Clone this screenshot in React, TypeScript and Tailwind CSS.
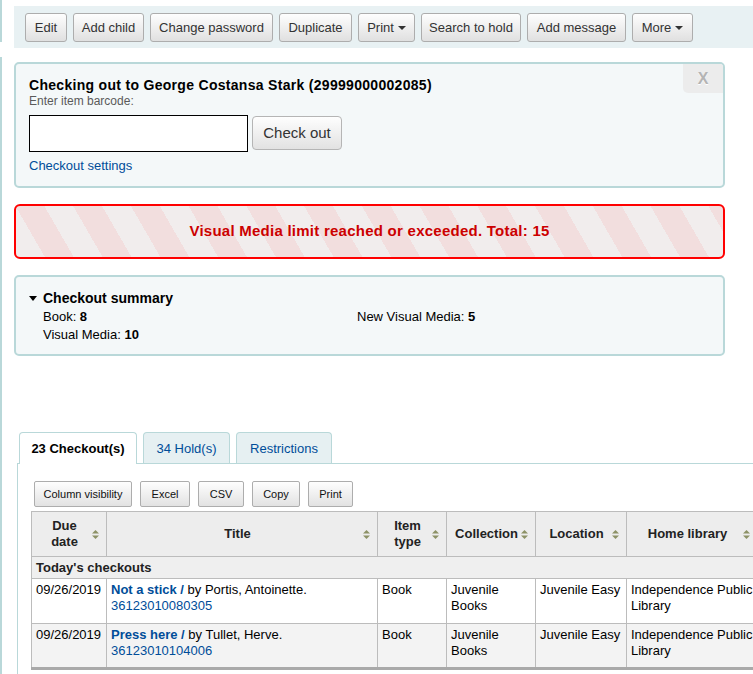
import React from "react";

const SortIcon = () => (
  <svg width="7" height="9" viewBox="0 0 7 9" className="shrink-0">
    <path d="M3.5 0 L7 3.5 L0 3.5 Z" fill="#8d9266" />
    <path d="M0 5.5 L7 5.5 L3.5 9 Z" fill="#8d9266" />
  </svg>
);

const Caret = () => (
  <span className="ml-[4px] inline-block h-0 w-0 border-x-[4px] border-t-[4px] border-x-transparent border-t-[#333]" />
);

const Btn = ({ className, children }: { className: string; children: React.ReactNode }) => (
  <button
    className={
      "flex h-[29px] items-center justify-center rounded-[3px] border border-[#adadad] bg-linear-to-b from-[#fefefe] to-[#e0e0e0] text-[13px] text-[#333] " +
      className
    }
  >
    {children}
  </button>
);

const SmallBtn = ({ className, children }: { className: string; children: React.ReactNode }) => (
  <button
    className={
      "flex h-[26px] items-center justify-center rounded-[2px] border border-[#adadad] bg-linear-to-b from-[#fefefe] to-[#e2e2e2] text-[11px] text-[#111] " +
      className
    }
  >
    {children}
  </button>
);

const Th = ({ children, className }: { children: React.ReactNode; className: string }) => (
  <th className={"border border-[#bcbcbc] bg-[#ededed] p-0 align-middle " + className}>
    <div className="flex items-center pl-[5px] pr-[7px]">
      <span className="flex-1 text-center text-[13px] font-bold leading-[16px] text-[#222]">{children}</span>
      <SortIcon />
    </div>
  </th>
);

const Td = ({ children, className }: { children?: React.ReactNode; className?: string }) => (
  <td className={"border border-[#bcbcbc] px-[4px] pt-[3px] align-top leading-[16px] " + (className ?? "")}>
    {children}
  </td>
);

export default function App() {
  return (
    <div className="flex h-[674px] w-[753px] overflow-hidden bg-white font-['Liberation_Sans',Arial,sans-serif] text-[13px] text-black">
      <div className="flex w-[2px] shrink-0 flex-col">
        <div className="h-[42px] bg-[#b9d8d9]" />
        <div className="h-[15px]" />
        <div className="flex-1 bg-[#b9d8d9]" />
      </div>
      <div className="flex min-w-0 flex-1 flex-col pl-[12px]">
        {/* toolbar */}
        <div className="mt-[6px] flex h-[42px] shrink-0 items-start gap-[6px] bg-[#e8f1f3] pl-[11px] pt-[7px]">
          <Btn className="w-[42px]">Edit</Btn>
          <Btn className="w-[71px]">Add child</Btn>
          <Btn className="w-[123px]">Change password</Btn>
          <Btn className="w-[73px]">Duplicate</Btn>
          <Btn className="w-[57px]">
            Print
            <Caret />
          </Btn>
          <Btn className="w-[100px]">Search to hold</Btn>
          <Btn className="w-[99px]">Add message</Btn>
          <Btn className="w-[61px]">
            More
            <Caret />
          </Btn>
        </div>

        {/* checkout box */}
        <div className="relative mt-[14px] h-[126px] w-[711px] shrink-0 rounded-[5px] border-2 border-[#b9d8d9] bg-[#f4f8f9] pl-[13px] pt-[13px]">
          <div className="text-[14px] font-bold leading-[17px] tracking-[0.3px]">
            Checking out to George Costansa Stark (29999000002085)
          </div>
          <div className="text-[12px] leading-[14px] text-[#5a5a5a]">Enter item barcode:</div>
          <div className="mt-[7px] flex items-start">
            <div className="h-[37px] w-[219px] border border-black bg-white" />
            <button className="ml-[4px] mt-[1px] h-[34px] w-[90px] rounded-[4px] border border-[#b5b5b5] bg-linear-to-b from-[#fefefe] to-[#e2e2e2] text-[15px] text-[#333]">
              Check out
            </button>
          </div>
          <div className="mt-[6px] text-[13px] leading-[16px] text-[#004d99]">Checkout settings</div>
          <div className="absolute right-0 top-0 flex h-[29px] w-[40px] items-center justify-center rounded-bl-[5px] rounded-tr-[3px] bg-[#ececec] text-[16px] font-bold text-[#b4b4b4] [text-shadow:0_1px_0_#fff]">
            X
          </div>
        </div>

        {/* alert */}
        <div className="mt-[16px] flex h-[55px] w-[711px] shrink-0 items-center justify-center rounded-[6px] border-2 border-[#ff0000] bg-[repeating-linear-gradient(60deg,#f1eded,#f1eded_25px,#f2dede_25px,#f2dede_50px)]">
          <span className="text-[15px] font-bold tracking-[0.25px] text-[#cc0000]">
            Visual Media limit reached or exceeded. Total: 15
          </span>
        </div>

        {/* summary */}
        <div className="mt-[16px] h-[81px] w-[711px] shrink-0 rounded-[5px] border-2 border-[#b9d8d9] bg-[#f4f8f9] pl-[13px] pt-[12px]">
          <div className="flex items-center text-[14px] font-bold leading-[19px]">
            <span className="mr-[6px] inline-block h-0 w-0 border-x-[4px] border-t-[5px] border-x-transparent border-t-black" />
            Checkout summary
          </div>
          <div className="grid grid-cols-[314px_1fr] pl-[14px] text-[13px] leading-[18px]">
            <div>
              Book: <b>8</b>
            </div>
            <div>
              New Visual Media: <b>5</b>
            </div>
            <div>
              Visual Media: <b>10</b>
            </div>
          </div>
        </div>

        {/* tabs */}
        <div className="ml-[3px] mt-[76px] flex min-h-0 flex-1 flex-col">
          <div className="flex shrink-0 items-end gap-[6px] border-b border-[#b9d8d9] pl-[2px]">
            <div className="-mb-px flex h-[32px] w-[118px] items-center justify-center rounded-t-[4px] border border-b-0 border-[#b9d8d9] bg-white text-[13px] font-bold">
              23 Checkout(s)
            </div>
            <div className="flex h-[31px] w-[87px] items-center justify-center rounded-t-[4px] border border-b-0 border-[#b9d8d9] bg-[#e6f0f2] pt-[1px] text-[13px] text-[#004d99]">
              34 Hold(s)
            </div>
            <div className="flex h-[31px] w-[96px] items-center justify-center rounded-t-[4px] border border-b-0 border-[#b9d8d9] bg-[#e6f0f2] pt-[1px] text-[13px] text-[#004d99]">
              Restrictions
            </div>
          </div>
          <div className="flex-1 border-l border-[#b9d8d9] pl-[13px] pt-[17px]">
            <div className="ml-[3px] flex gap-[8px]">
              <SmallBtn className="w-[98px]">Column visibility</SmallBtn>
              <SmallBtn className="w-[50px]">Excel</SmallBtn>
              <SmallBtn className="w-[46px]">CSV</SmallBtn>
              <SmallBtn className="w-[48px]">Copy</SmallBtn>
              <SmallBtn className="w-[45px]">Print</SmallBtn>
            </div>
            <table className="mt-[4px] w-[726px] table-fixed border-collapse text-[13px]">
              <colgroup>
                <col className="w-[75px]" />
                <col className="w-[271px]" />
                <col className="w-[69px]" />
                <col className="w-[89px]" />
                <col className="w-[91px]" />
                <col className="w-[131px]" />
              </colgroup>
              <thead>
                <tr className="h-[45px]">
                  <Th className="">
                    Due
                    <br />
                    date
                  </Th>
                  <Th className="">Title</Th>
                  <Th className="">
                    Item
                    <br />
                    type
                  </Th>
                  <Th className="">Collection</Th>
                  <Th className="">Location</Th>
                  <Th className="">Home library</Th>
                </tr>
              </thead>
              <tbody>
                <tr className="h-[22px] bg-[#efefef]">
                  <td colSpan={6} className="border border-[#bcbcbc] px-[4px] align-middle font-bold leading-[16px] text-[#222]">
                    Today's checkouts
                  </td>
                </tr>
                <tr className="h-[45px] bg-white">
                  <Td>09/26/2019</Td>
                  <Td>
                    <span className="font-bold text-[#004d99]">Not a stick /</span> by Portis, Antoinette.
                    <br />
                    <span className="text-[#004d99]">36123010080305</span>
                  </Td>
                  <Td>Book</Td>
                  <Td>
                    Juvenile
                    <br />
                    Books
                  </Td>
                  <Td>Juvenile Easy</Td>
                  <Td>
                    <span className="whitespace-nowrap">Independence Public</span>
                    <br />
                    Library
                  </Td>
                </tr>
                <tr className="h-[45px] bg-[#f3f3f3]">
                  <Td className="border-b-[3px] border-b-[#a9a9a9]">09/26/2019</Td>
                  <Td className="border-b-[3px] border-b-[#a9a9a9]">
                    <span className="font-bold text-[#004d99]">Press here /</span> by Tullet, Herve.
                    <br />
                    <span className="text-[#004d99]">36123010104006</span>
                  </Td>
                  <Td className="border-b-[3px] border-b-[#a9a9a9]">Book</Td>
                  <Td className="border-b-[3px] border-b-[#a9a9a9]">
                    Juvenile
                    <br />
                    Books
                  </Td>
                  <Td className="border-b-[3px] border-b-[#a9a9a9]">Juvenile Easy</Td>
                  <Td className="border-b-[3px] border-b-[#a9a9a9]">
                    <span className="whitespace-nowrap">Independence Public</span>
                    <br />
                    Library
                  </Td>
                </tr>
              </tbody>
            </table>
          </div>
        </div>
      </div>
    </div>
  );
}
